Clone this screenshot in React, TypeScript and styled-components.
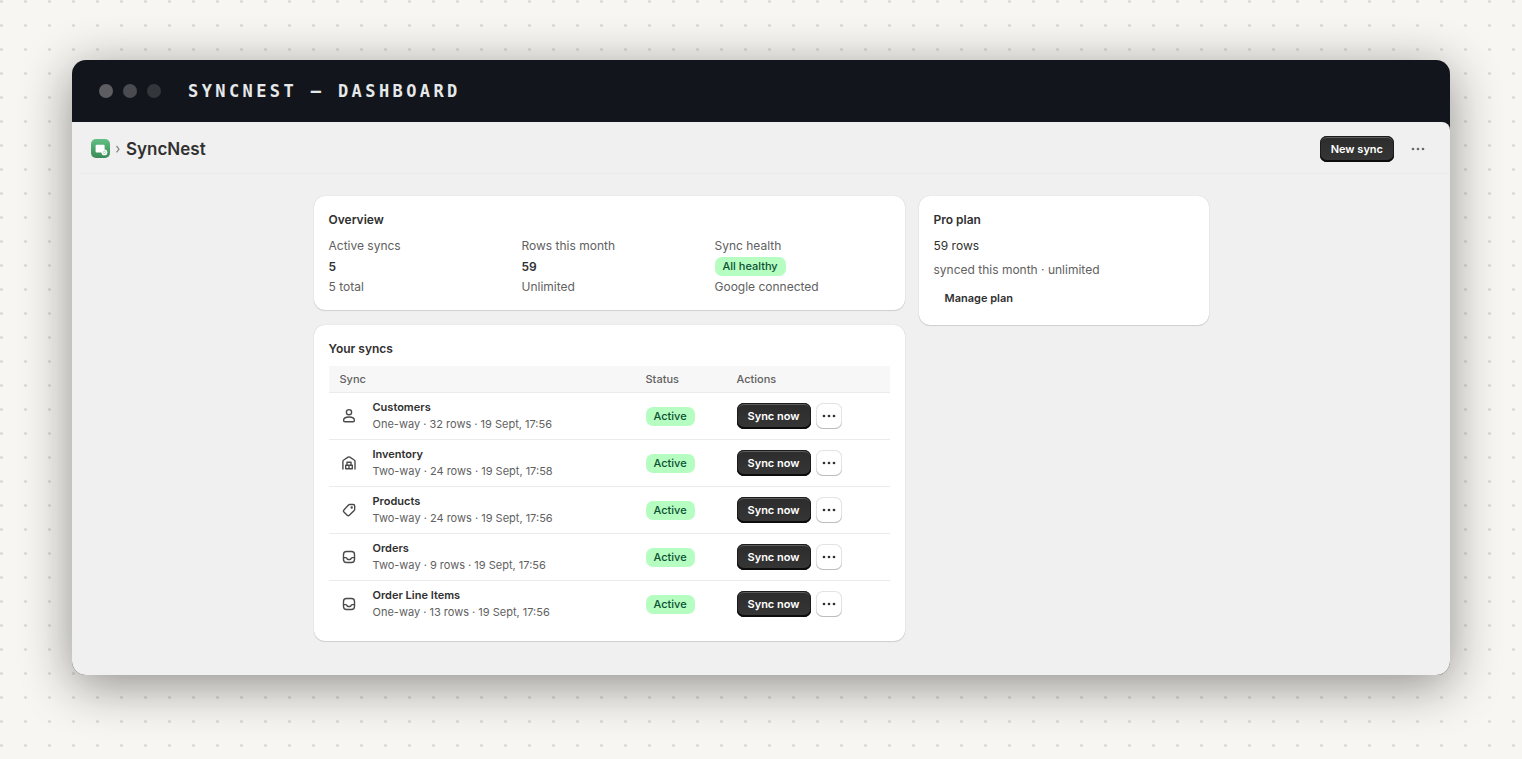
import React from "react";
import styled, { createGlobalStyle, css } from "styled-components";

const GlobalStyle = createGlobalStyle`
  *, *::before, *::after { box-sizing: border-box; }
  body {
    margin: 0;
    background-color: #f7f6f2;
    background-image: radial-gradient(circle at 6.25% 6.25%, #dcdcd7 1px, transparent 2px);
    background-size: 24px 24px;
    font-family: Inter, "Liberation Sans", sans-serif;
    font-size: 12px;
    line-height: 18px;
    color: #303030;
  }
  h1, h2, p, dl, dd { margin: 0; }
`;

const Stage = styled.div`
  min-height: 100vh;
  padding: 60px 72px 84px;
  display: flex;
`;

const Window = styled.div`
  flex: 1;
  min-width: 0;
  display: flex;
  flex-direction: column;
  border-radius: 14px;
  background: #12161c;
  box-shadow: 0 10px 50px rgba(20, 20, 18, 0.46);
  overflow: hidden;
`;

const TitleBar = styled.div`
  display: flex;
  align-items: center;
  height: 62px;
  padding: 0 27px;
`;

const Lights = styled.div`
  display: flex;
  gap: 10px;
  margin-right: 27px;
`;

const Light = styled.span<{ $color: string }>`
  width: 14px;
  height: 14px;
  border-radius: 50%;
  background: ${(p) => p.$color};
`;

const WindowTitle = styled.span`
  font: 700 17px/24px "DejaVu Sans Mono", monospace;
  letter-spacing: 0.2em;
  color: #e6e8ea;
`;

const Screen = styled.main`
  flex: 1;
  background: #f0f0f0;
  border-top-right-radius: 8px;
`;

const Header = styled.header`
  display: flex;
  align-items: center;
  height: 52px;
  margin-left: 9px;
  padding: 2px 19px 0 10px;
  border-bottom: 1px solid #ebebeb;
`;

const Heading = styled.h1`
  flex: 1;
  font-size: 17px;
  line-height: 24px;
  font-weight: 600;
`;

const Chevron = styled.svg`
  margin: 0 5px;
`;

const buttonBase = css`
  height: 26px;
  border: 0;
  border-radius: 7px;
  font: 600 11px/16px Inter, "Liberation Sans", sans-serif;
  color: #303030;
  cursor: pointer;
`;

const PrimaryButton = styled.button`
  ${buttonBase}
  padding: 0 11px;
  color: #fff;
  background: linear-gradient(#2c2c2c, #363636);
  box-shadow: inset 0 -2px 0 #0c0c0c, inset 0 0 0 1px #1c1c1c, inset 0 2px 0 #5c5c5c;
`;

const PlainButton = styled.button`
  ${buttonBase}
  align-self: flex-start;
  padding: 0 11px;
  background: transparent;
`;

const IconButton = styled.button<{ $outlined?: boolean }>`
  ${buttonBase}
  width: 26px;
  padding: 0;
  display: inline-flex;
  align-items: center;
  justify-content: center;
  background: ${(p) => (p.$outlined ? "#fff" : "transparent")};
  color: ${(p) => (p.$outlined ? "#303030" : "#6a6a6a")};
  box-shadow: ${(p) => (p.$outlined ? "inset 0 -1px 0 #bdbdbd, inset 0 0 0 1px #e3e3e3" : "none")};
`;

const HeaderActions = styled.div`
  display: flex;
  align-items: center;
  gap: 11px;
`;

const Content = styled.div`
  display: grid;
  grid-template-columns: minmax(0, 1fr) 290px;
  align-items: start;
  gap: 14px;
  max-width: 895px;
  margin: 0 auto;
  padding: 22px 0 34px;
`;

const Column = styled.div`
  display: flex;
  flex-direction: column;
  gap: 15px;
`;

const Card = styled.section`
  display: flex;
  flex-direction: column;
  padding: 15px 15px 14px;
  border-radius: 11px;
  background: #fff;
  box-shadow: 0 1px 1px rgba(0, 0, 0, 0.12), 0 0 1px rgba(0, 0, 0, 0.22);
`;

const CardTitle = styled.h2`
  font-size: 12px;
  line-height: 18px;
  font-weight: 600;
  margin-bottom: 8px;
`;

const Stats = styled.dl`
  display: grid;
  grid-template-columns: repeat(3, minmax(0, 1fr));
  gap: 18px;
`;

const Stat = styled.div`
  display: grid;
  grid-template-rows: 18px 19px 18px;
  row-gap: 2px;
  align-items: center;
  color: #616161;
`;

const StatValue = styled.dd`
  display: flex;
  font-weight: 600;
  color: #303030;
`;

const Badge = styled.span`
  display: inline-block;
  padding: 0 8px;
  border-radius: 7px;
  background: #b6fdc2;
  color: #0c5132;
  font-size: 11px;
  line-height: 19px;
  font-weight: 500;
`;

const PlanDetails = styled.div`
  display: flex;
  flex-direction: column;
  gap: 6px;
`;

const Muted = styled.p`
  color: #616161;
`;

const Table = styled.table`
  width: 100%;
  table-layout: fixed;
  border-collapse: separate;
  border-spacing: 0;
  text-align: left;
`;

const HeadCell = styled.th<{ $width?: number }>`
  width: ${(p) => (p.$width ? `${p.$width}px` : "auto")};
  height: 26px;
  padding: 0 11px;
  background: #f7f7f7;
  color: #616161;
  font-size: 11px;
  line-height: 16px;
  font-weight: 500;
`;

const Cell = styled.td`
  height: 47px;
  padding: 0 11px;
  border-top: 1px solid #ebebeb;
  vertical-align: middle;
`;

const SyncInfo = styled.div`
  display: flex;
  align-items: center;
  gap: 15px;
`;

const SyncText = styled.div`
  font-size: 11px;
  line-height: 17px;
  color: #616161;
`;

const SyncName = styled.div`
  font-weight: 600;
  color: #303030;
`;

const RowActions = styled.div`
  display: flex;
  gap: 5px;
`;

const Dots = () => (
  <svg width="14" height="4" viewBox="0 0 14 4" fill="currentColor" aria-hidden="true">
    <circle cx="2" cy="2" r="1.35" />
    <circle cx="7" cy="2" r="1.35" />
    <circle cx="12" cy="2" r="1.35" />
  </svg>
);

const Logo = () => (
  <svg width="19" height="19" viewBox="0 0 19 19" aria-hidden="true">
    <defs>
      <linearGradient id="logo" x1="0" y1="0" x2="0" y2="1">
        <stop offset="0" stopColor="#62c083" />
        <stop offset="1" stopColor="#3a8a57" />
      </linearGradient>
    </defs>
    <rect width="19" height="19" rx="5" fill="url(#logo)" />
    <rect x="4.6" y="5.8" width="9" height="7.8" rx="1" fill="#fff" />
    <circle cx="13.4" cy="13.4" r="2.9" fill="#fff" />
    <path d="M12.2 13.4a1.3 1.3 0 0 1 2.2-.8M14.6 13.5a1.3 1.3 0 0 1-2.2.8" fill="none" stroke="#4da56b" strokeWidth=".6" />
  </svg>
);

type IconKind = "person" | "warehouse" | "tag" | "inbox";

const shapes: Record<IconKind, React.ReactNode> = {
  person: (
    <>
      <circle cx="9" cy="5.2" r="2.6" />
      <path d="M3.6 13.4c0-2 2.4-3.4 5.4-3.4s5.4 1.4 5.4 3.4c0 .8-.6 1.3-1.4 1.3H5c-.8 0-1.4-.5-1.4-1.3z" />
    </>
  ),
  warehouse: (
    <>
      <path d="M2.9 15V7.4c0-.6.3-1.1.8-1.4l4.4-2.9c.5-.3 1.2-.3 1.7 0l4.4 2.9c.5.3.8.8.8 1.4V15" />
      <path d="M5.7 14.7v-3.4h6.6v3.4zM9 11.3v3.4M7 11.3V8.2h4v3.1" />
    </>
  ),
  tag: (
    <>
      <path d="M9.5 3.5h3.7c.9 0 1.500.6 1.500 1.500v3.300c0 .4-.2.8-.5 1.100l-4.900 4.900c-.6.6-1.500.6-2.100 0l-3.300-3.300c-.6-.6-.6-1.500 0-2.100l4.600-4.900c.3-.3.6-.5 1-.5z" />
      <circle cx="11.7" cy="6.5" r=".5" fill="currentColor" />
    </>
  ),
  inbox: (
    <>
      <rect x="3.5" y="3.5" width="11" height="11" rx="3" />
      <path d="M3.5 9.6h2.3c.4 0 .7.2.9.5l.5.9c.2.3.5.5.9.5h1.800c.4 0 .7-.2.9-.5l.5-.9c.2-.3.5-.5.9-.5h2.300" />
    </>
  ),
};

const SyncIcon = ({ kind }: { kind: IconKind }) => (
  <svg
    width="18"
    height="18"
    viewBox="0 0 18 18"
    fill="none"
    stroke="#4a4a4a"
    strokeWidth="1.4"
    strokeLinecap="round"
    strokeLinejoin="round"
    aria-hidden="true"
  >
    {shapes[kind]}
  </svg>
);

const syncs: { name: string; detail: string; icon: IconKind }[] = [
  { name: "Customers", detail: "One-way · 32 rows · 19 Sept, 17:56", icon: "person" },
  { name: "Inventory", detail: "Two-way · 24 rows · 19 Sept, 17:58", icon: "warehouse" },
  { name: "Products", detail: "Two-way · 24 rows · 19 Sept, 17:56", icon: "tag" },
  { name: "Orders", detail: "Two-way · 9 rows · 19 Sept, 17:56", icon: "inbox" },
  { name: "Order Line Items", detail: "One-way · 13 rows · 19 Sept, 17:56", icon: "inbox" },
];

export default function App() {
  return (
    <Stage>
      <GlobalStyle />
      <Window>
        <TitleBar>
          <Lights>
            <Light $color="#5d5d62" />
            <Light $color="#494b50" />
            <Light $color="#33363b" />
          </Lights>
          <WindowTitle>SYNCNEST — DASHBOARD</WindowTitle>
        </TitleBar>
        <Screen>
          <Header>
            <Logo />
            <Chevron width="6" height="10" viewBox="0 0 6 10" fill="none" stroke="#8a8a8a" strokeWidth="1.3" aria-hidden="true">
              <path d="M1.5 2l2.5 3.2-2.5 3.2" />
            </Chevron>
            <Heading>SyncNest</Heading>
            <HeaderActions>
              <PrimaryButton type="button">New sync</PrimaryButton>
              <IconButton type="button" aria-label="More actions">
                <Dots />
              </IconButton>
            </HeaderActions>
          </Header>
          <Content>
            <Column>
              <Card>
                <CardTitle>Overview</CardTitle>
                <Stats>
                  <Stat>
                    <dt>Active syncs</dt>
                    <StatValue>5</StatValue>
                    <dd>5 total</dd>
                  </Stat>
                  <Stat>
                    <dt>Rows this month</dt>
                    <StatValue>59</StatValue>
                    <dd>Unlimited</dd>
                  </Stat>
                  <Stat>
                    <dt>Sync health</dt>
                    <StatValue>
                      <Badge>All healthy</Badge>
                    </StatValue>
                    <dd>Google connected</dd>
                  </Stat>
                </Stats>
              </Card>
              <Card>
                <CardTitle>Your syncs</CardTitle>
                <Table>
                  <thead>
                    <tr>
                      <HeadCell scope="col">Sync</HeadCell>
                      <HeadCell scope="col" $width={91}>Status</HeadCell>
                      <HeadCell scope="col" $width={164}>Actions</HeadCell>
                    </tr>
                  </thead>
                  <tbody>
                    {syncs.map((sync) => (
                      <tr key={sync.name}>
                        <Cell>
                          <SyncInfo>
                            <SyncIcon kind={sync.icon} />
                            <SyncText>
                              <SyncName>{sync.name}</SyncName>
                              <div>{sync.detail}</div>
                            </SyncText>
                          </SyncInfo>
                        </Cell>
                        <Cell>
                          <Badge>Active</Badge>
                        </Cell>
                        <Cell>
                          <RowActions>
                            <PrimaryButton type="button">Sync now</PrimaryButton>
                            <IconButton type="button" $outlined aria-label={`More actions for ${sync.name}`}>
                              <Dots />
                            </IconButton>
                          </RowActions>
                        </Cell>
                      </tr>
                    ))}
                  </tbody>
                </Table>
              </Card>
            </Column>
            <Card>
              <CardTitle>Pro plan</CardTitle>
              <PlanDetails>
                <p>59 rows</p>
                <Muted>synced this month · unlimited</Muted>
                <PlainButton type="button">Manage plan</PlainButton>
              </PlanDetails>
            </Card>
          </Content>
        </Screen>
      </Window>
    </Stage>
  );
}
